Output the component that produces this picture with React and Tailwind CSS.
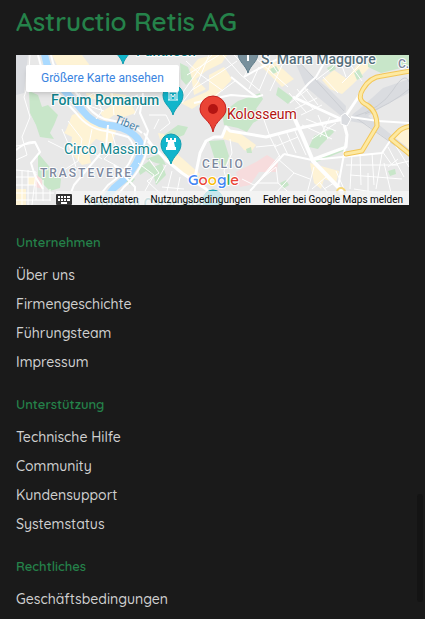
const sections = [
  { title: "Unternehmen", links: ["Über uns", "Firmengeschichte", "Führungsteam", "Impressum"] },
  { title: "Unterstützung", links: ["Technische Hilfe", "Community", "Kundensupport", "Systemstatus"] },
  { title: "Rechtliches", links: ["Geschäftsbedingungen"] },
];

function Pin({ x, y, color, edge, children }) {
  return (
    <g transform={`translate(${x} ${y})`}>
      <path d="M0 20C-2 12-10 9-10 0A10 10 0 0 1 10 0C10 9 2 12 0 20Z" fill={color} stroke={edge} strokeWidth="1" />
      {children}
    </g>
  );
}

function MapDrawing() {
  return (
    <svg className="absolute inset-0 h-full w-full" viewBox="0 0 393 150" preserveAspectRatio="xMidYMid slice" role="img" aria-label="Karte mit Kolosseum">
      <rect width="393" height="150" fill="#e8e8e8" />
      <path d="M0 0H12L8 38L0 40Z" fill="#dadce0" />

      <g fill="#fef3d5">
        <path d="M36 0H66L75 12H42Z" />
        <path d="M50 75L56 60L62 58L78 68L100 76L96 90L80 84L72 92L75 108L66 110L54 97L56 82L48 78Z" />
        <path d="M84 58L96 50L94 38L110 40L120 58L108 62L98 60L90 66Z" />
        <path d="M70 38L90 40L88 44L72 44Z" />
        <path d="M165 48L190 37L212 22L215 26L196 41L176 54Z" />
        <path d="M174 14L182 4L196 0H211L206 8L190 16L180 24L190 34L178 40Z" />
        <path d="M193 20L208 12L216 24L200 42L193 36Z" />
        <path d="M244 10L258 6L278 24L266 32Z" />
        <path d="M306 25L318 15L331 24L345 4L356 10L336 30L326 39L314 34Z" />
        <path d="M142 78L154 80L158 96L184 119L178 128L150 105Z" />
        <path d="M207 75L221 76L240 90L235 97L228 95L222 88L207 84Z" />
        <path d="M294 108L323 116L320 128L308 124L305 134L298 128Z" />
        <path d="M384 72H393V95L378 85Z" />
        <path d="M0 134H10V150H0ZM12 122H20V130H12Z" />
      </g>

      <g fill="#c8e6c9">
        <path d="M13 36L22 40L26 52L32 50L42 60L38 70L34 78L38 84L24 82L20 70L14 58Z" />
        <path d="M22 98L32 110L45 124L44 133L34 136L28 130L22 124Z" />
        <path d="M206 58L222 46L244 38L247 44L240 54L247 62L237 68L231 77L222 73L208 70Z" />
        <path d="M164 8L172 12L176 24L170 30L165 24Z" />
        <path d="M148 80L162 70L172 72L168 80L158 84L163 94L154 92Z" />
        <path d="M193 86L208 85L213 101L209 112L200 108Z" />
        <path d="M293 92L298 81L316 74L318 77L305 90L302 94Z" />
        <path d="M298 104L328 91L330 95L298 108Z" />
        <path d="M352 0H393V11L365 18L352 12Z" />
        <path d="M338 18L343 14L347 22L341 25Z" />
        <path d="M262 32L277 43L272 49L260 40Z" />
        <path d="M372 116L379 114L380 119L374 121Z" />
        <path d="M264 128L270 125L273 130L267 134Z" />
        <path d="M122 114L133 106L138 112L146 108L150 120L140 130L138 122L130 116L124 120Z" />
        <path d="M130 104L144 99L150 110L140 108Z" />
        <path d="M112 119L119 124L114 130L108 125Z" />
        <path d="M230 94L235 92L236 98L231 98ZM254 14L260 11L263 16L257 19ZM311 13L318 9L320 14L314 17Z" />
      </g>

      <g fill="#f7dcdd">
        <path d="M220 117L240 107L251 100L262 107L261 117L243 117L234 130L224 132Z" />
        <path d="M19 119L26 124L27 134L19 132Z" />
      </g>

      <path d="M276 0L293 18L314 35L330 51L329 64L309 48L290 32Z" fill="#dadce0" />
      <path d="M337 59L346 52L367 33L393 24V38L369 50L352 61L393 94V100L350 69L333 66Z" fill="#dadce0" />
      <g stroke="#cbced3" strokeWidth="1" fill="none">
        <path d="M284 8L328 56" />
        <path d="M337 62Q365 54 377 35T393 27M349 59Q376 49 393 34M340 63L390 98" />
      </g>

      <path d="M28 -4Q31 18 44 31T67 56Q76 68 90 70Q108 71 118 80Q128 88 124 100Q117 119 98 133L82 154" fill="none" stroke="#aadaff" strokeWidth="7" />

      <g fill="none" stroke="#fff" strokeWidth="1" strokeLinejoin="round">
        <path d="M14 0L12 30L8 42L14 62L6 82L11 100L0 105M0 91L19 88L24 98M0 115L20 117L16 150" />
        <path d="M50 42L58 50L78 38M63 38L70 50L88 56M78 38L86 56L80 64" />
        <path d="M46 74L54 93L60 112M52 66L66 84L62 106L45 117M32 86L54 97L78 92" />
        <path d="M96 38L98 60M96 50L122 40M128 40L118 60" />
        <path d="M76 74L72 94L86 104M96 78L100 92L88 104L110 116" />
        <path d="M122 108L138 120L129 136M133 104L143 118L131 126L148 142" />
        <path d="M133 60L150 60L154 68L144 76M143 64L138 74" />
        <path d="M165 40L184 13L196 0M170 6L185 20L207 36M171 20L203 0M176 35L205 17L221 6" />
        <path d="M207 0L225 20L244 36M218 0L232 14L228 22M250 0L262 18M236 0L272 32M243 12L233 34M255 8L243 36M270 2L254 36" />
        <path d="M193 0L182 27L166 48M200 40L219 26M233 36L242 42" />
        <path d="M273 38L290 57M281 34L297 54M288 32L302 50M274 48L292 34M279 54L301 43M285 60L306 50" />
        <path d="M300 25L316 13L326 0M307 22L322 38M322 0L330 22M333 8L346 26M326 28L346 8" />
        <path d="M254 82L264 102M262 79L272 100M270 76L280 98M278 74L290 100M258 92L282 82M247 62L254 82" />
        <path d="M290 64L320 76M286 70L316 84M302 60L312 84M314 62L304 82M296 84L320 68" />
        <path d="M214 84L216 98L208 116L212 130M240 92L260 90M226 124L238 130L260 112L262 128" />
        <path d="M234 136L264 100M262 104L278 118L258 140M278 118L294 124M240 128L262 128L280 144" />
        <path d="M298 112L290 142M310 122L296 134M320 116L328 134M308 134L318 128M304 128L312 138" />
        <path d="M336 99L334 134M344 98L345 130M356 98L358 130M366 98L360 134M330 110H382M334 120L386 124M338 134L388 142M352 118V146M368 108L376 142" />
        <path d="M372 92L388 122M378 88L393 112M366 96L376 110L393 106M382 104L372 112" />
        <path d="M150 110L140 128M156 116L150 140M164 122L160 142M146 132L168 134" />
      </g>
      <g stroke="#fff" strokeWidth="1">
        <path d="M0 122H18M0 130H20M0 138H38M0 145H35M6 115V150M12 115V150M20 119V145M27 125V146M34 134V146" />
      </g>
      <g fill="none" stroke="#fff" strokeWidth="2" strokeLinejoin="round">
        <path d="M22 0Q26 20 38 34L60 58Q72 74 90 76L112 82Q120 90 117 100Q110 118 92 130L76 150" />
        <path d="M35 0Q38 18 52 28L72 52Q82 64 94 65L116 70L126 78M132 92Q126 116 108 132L94 150" />
        <path d="M92 70L90 92L68 118L58 130L50 150" />
        <path d="M127 38L124 58L132 76L128 90M128 78L136 90" />
        <path d="M0 95Q10 86 19 87L24 97L15 108L19 121L27 134" />
        <path d="M98 110L119 132L119 150" />
        <path d="M335 62L362 66L393 68M328 68L331 80L328 99L322 132" />
        <path d="M268 99L234 136M268 99L296 105L366 98L374 86" />
        <path d="M280 42L293 28L300 22L308 8L314 0" />
        <path d="M228 22L242 14L262 4L270 0" />
      </g>
      <g fill="none" stroke="#fff" strokeWidth="3" strokeLinejoin="round">
        <path d="M132 86L150 105L166 118L190 134L205 150" />
        <path d="M178 128L184 98L190 86L198 82L206 82L210 72L214 76L250 82L284 73L328 64" />
        <path d="M215 22L240 42L247 40M178 48L196 44L215 40L240 42" strokeWidth="2" />
        <path d="M277 42L327 65L343 41" />
        <path d="M277 60L286 80L297 106L324 134L333 150" strokeWidth="4" />
        <path d="M298 104L330 92L331 80L327 65" />
      </g>
      <path d="M325 61L329 58L335 64L331 71L325 69Z" fill="#dadce0" stroke="#fff" />

      <g fill="none" strokeLinejoin="round" strokeLinecap="round">
        <g stroke="#f3c657" strokeWidth="5">
          <path d="M394 16L366 21Q354 22 347 34Q340 45 351 50Q361 56 361 71L346 96L330 99" />
          <path d="M396 71Q386 72 382 77L375 84L396 101" />
        </g>
        <g stroke="#fde9a2" strokeWidth="3">
          <path d="M394 16L366 21Q354 22 347 34Q340 45 351 50Q361 56 361 71L346 96L330 99" />
          <path d="M396 71Q386 72 382 77L375 84L396 101" />
        </g>
      </g>
      <circle cx="325" cy="137" r="4" fill="none" stroke="#f6d779" strokeWidth="2" />

      <g fontFamily="Roboto, sans-serif" fontSize="14" fontWeight="500" stroke="#fff" strokeWidth="2" strokeLinejoin="round" paintOrder="stroke">
        <text x="120" y="1" fill="#12858d">Pantheon</text>
        <text x="245" y="9" fill="#546e7a">S. Maria Maggiore</text>
        <text x="35" y="50" fill="#12858d">Forum Romanum</text>
        <text x="48" y="99" fontWeight="400" fill="#12858d">Circo Massimo</text>
        <text x="211" y="64" fill="#b31412" fontWeight="400">Kolosseum</text>
        <text x="382" y="13" fontSize="12" fill="#7d889e">C.</text>
        <text x="24" y="122" fontSize="12" letterSpacing="2" fill="#7d889e">TRASTEVERE</text>
        <text x="186" y="113" fontSize="12" letterSpacing="2" fill="#7d889e">CELIO</text>
        <text x="98" y="67" fontSize="11" fontWeight="400" fill="#4a83aa" stroke="none" transform="rotate(22 98 67)">Tiber</text>
        <text x="69" y="154" fill="#12858d">Terme di Caracalla</text>
      </g>

      <Pin x="107" y="-11" color="#12b5cb" edge="#129eaf" />
      <Pin x="232" y="-2" color="#78909c" edge="#607d8b">
        <path d="M0-6V8M-3 1H3" stroke="#fff" strokeWidth="2" />
      </Pin>
      <Pin x="157" y="40" color="#12b5cb" edge="#129eaf">
        <path d="M-5-3H5M-5 5H5M-4-3V5M4-3V5M-2 4V-1L0 2L2-1V4" stroke="#fff" fill="none" />
      </Pin>
      <Pin x="155" y="89" color="#12b5cb" edge="#129eaf">
        <path d="M-5-6H-3V-4H-1V-6H1V-4H3V-6H5V-2H3L4 3H5V6H-5V3H-4L-3-2H-5Z" fill="#fff" />
      </Pin>
      <Pin x="197" y="145" color="#12b5cb" edge="#129eaf">
        <circle r="3" fill="#fff" />
      </Pin>

      <g transform="translate(197 54)">
        <path d="M0 23C-2 11-13 9-13 0A13 13 0 0 1 13 0C13 9 2 11 0 23Z" fill="#ea4335" stroke="#c5221f" />
        <circle r="5" fill="#b31412" />
      </g>

      <text x="172" y="130" fontFamily="Quicksand, Lato, sans-serif" fontSize="15" fontWeight="600" stroke="#fff" strokeWidth="2" paintOrder="stroke">
        <tspan fill="#4285f4">G</tspan><tspan fill="#ea4335">o</tspan><tspan fill="#fbbc04">o</tspan><tspan fill="#4285f4">g</tspan><tspan fill="#34a853">l</tspan><tspan fill="#ea4335">e</tspan>
      </text>
    </svg>
  );
}

export default function App() {
  return (
    <div className="min-h-screen bg-[#1a1a1a] px-4 pt-1 pb-2 font-['Quicksand','Lato',sans-serif] text-[#d0d0d0]">
      <h1 className="text-[26px] leading-9 font-semibold text-[#25824a]">Astructio Retis AG</h1>

      <section aria-label="Karte" className="relative mt-[15px] flex h-[150px] flex-col items-start justify-between overflow-hidden font-['Roboto',sans-serif]">
        <MapDrawing />
        <a href="#karte" className="relative mt-[10px] ml-[10px] rounded-xs bg-white px-[15px] py-[5px] text-[12px] leading-[17px] text-[#3a84df] shadow-md">
          Größere Karte ansehen
        </a>
        <div className="relative flex h-[14px] items-center gap-3 self-end bg-[#f5f5f5]/80 pt-[3px] pr-[6px] text-[10px] leading-[12px] whitespace-nowrap text-black">
          <button type="button" aria-label="Tastaturkürzel">
            <svg width="16" height="11" viewBox="0 0 16 11" className="block">
              <rect width="16" height="11" rx="1" fill="#333" />
              <path d="M2 2H4V4H2ZM5 2H7V4H5ZM8 2H10V4H8ZM11 2H14V4H11ZM2 5H4V7H2ZM5 5H7V7H5ZM8 5H10V7H8ZM11 5H14V7H11ZM5 8H11V10H5Z" fill="#fff" />
            </svg>
          </button>
          <button type="button">Kartendaten</button>
          <a href="#nutzung">Nutzungsbedingungen</a>
          <a href="#fehler">Fehler bei Google Maps melden</a>
        </div>
      </section>

      <nav className="mt-[27px] flex flex-col gap-[17px]" aria-label="Fußzeile">
        {sections.map((section) => (
          <section key={section.title}>
            <h2 className="text-[13px] leading-5 font-semibold text-[#25824a]">{section.title}</h2>
            <ul className="mt-[9px] flex flex-col">
              {section.links.map((link) => (
                <li key={link} className="h-[29px] pt-1">
                  <a href="#" className="block text-[14px] leading-5 font-medium">{link}</a>
                </li>
              ))}
            </ul>
          </section>
        ))}
      </nav>

      <div className="fixed right-[2px] bottom-[17px] h-[108px] w-[6px] rounded-full bg-[#141414]" />
    </div>
  );
}
